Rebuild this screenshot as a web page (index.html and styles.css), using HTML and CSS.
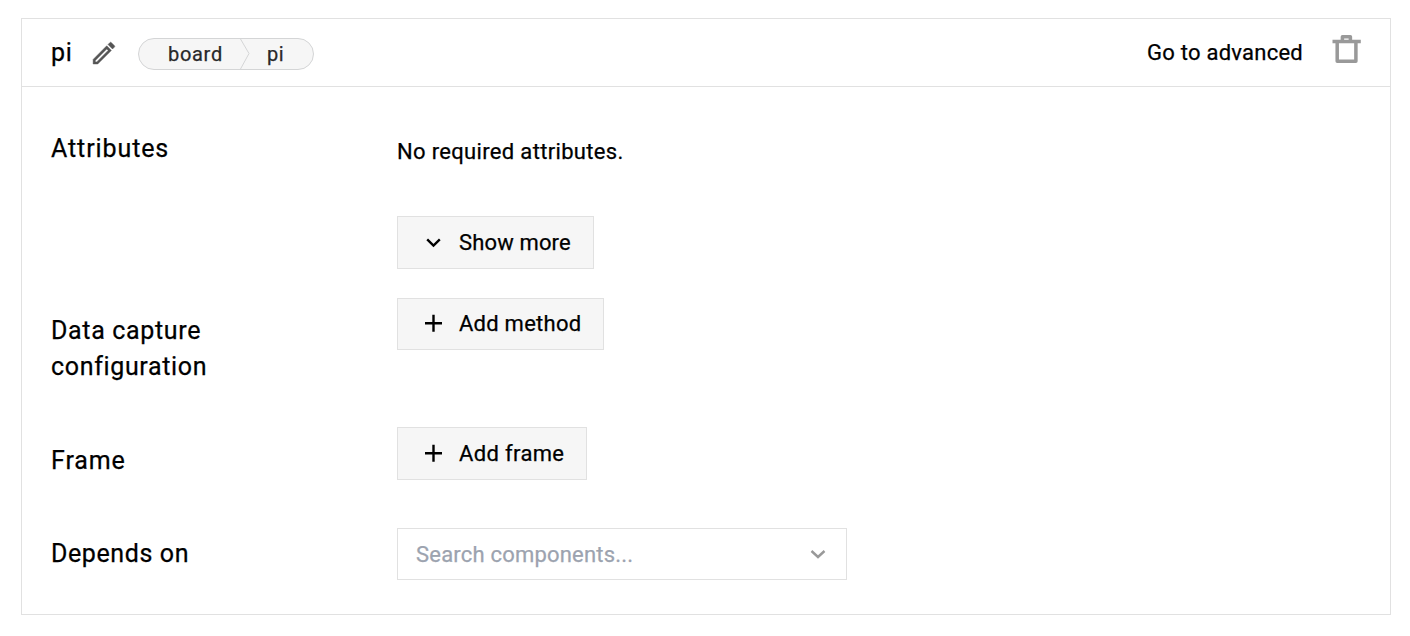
FILE: index.html
```html
<!DOCTYPE html>
<html lang="en">
<head>
<meta charset="utf-8">
<title>pi</title>
<link rel="stylesheet" href="styles.css">
</head>
<body>
<main class="card">
  <header class="card-header">
    <h1 class="name">pi</h1>
    <svg class="edit" width="30" height="30" viewBox="0 0 24 24" fill="#555"><path fill-rule="evenodd" d="M3.3 17.1V20.8H7L17.9 9.9 14.2 6.2ZM5.1 19.1V17.9L14.2 8.8 15.3 9.9 6.2 19.1ZM15.2 5.2 16.8 3.6Q17.3 3.1 17.8 3.6L20.4 6.2Q20.9 6.7 20.4 7.2L18.8 8.8Z" stroke="#555" stroke-width=".35"/></svg>
    <div class="crumbs">
      <span class="crumb crumb-type">board</span>
      <svg class="crumb-sep" width="10" height="30" viewBox="0 0 10 30" fill="none" stroke="#d4d5d6"><path d="M.5 0 9 14.5.5 30"/></svg>
      <span class="crumb crumb-model">pi</span>
    </div>
    <a class="advanced">Go to advanced</a>
    <svg class="trash" width="30" height="30" viewBox="0 0 30 30" fill="none" stroke="#999" stroke-width="3.5" stroke-linejoin="round"><path d="M.5 7.4H28.8M10.4 7V2.7H18.4V7M5.2 8V27.2H23.9V8"/></svg>
  </header>
  <section class="row row-attributes">
    <h2 class="label">Attributes</h2>
    <div class="field">
      <p class="note">No required attributes.</p>
      <button class="button button-more"><svg class="icon" width="22" height="22" viewBox="0 0 22 22" fill="none" stroke="#000" stroke-width="2.4"><path d="M4.2 7.4 10.5 13.5 16.8 7.4"/></svg><span class="text text-more">Show more</span></button>
    </div>
  </section>
  <section class="row row-capture">
    <h2 class="label label-capture">Data capture<br>configuration</h2>
    <button class="button button-method"><svg class="icon" width="22" height="22" viewBox="0 0 22 22" fill="none" stroke="#000" stroke-width="2.4"><path d="M2 10.2H19M10.5 1.7V18.7"/></svg><span class="text text-method">Add method</span></button>
  </section>
  <section class="row row-frame">
    <h2 class="label label-frame">Frame</h2>
    <button class="button button-frame"><svg class="icon" width="22" height="22" viewBox="0 0 22 22" fill="none" stroke="#000" stroke-width="2.4"><path d="M2 10.2H19M10.5 1.7V18.7"/></svg><span class="text text-frame">Add frame</span></button>
  </section>
  <section class="row row-depends">
    <h2 class="label label-depends">Depends on</h2>
    <div class="select"><span class="placeholder">Search components...</span><svg width="22" height="22" viewBox="0 0 22 22" fill="none" stroke="#999" stroke-width="2.4"><path d="M4.5 8 11 14 17.5 8"/></svg></div>
  </section>
</main>
</body>
</html>
```
FILE: styles.css
```css
* { box-sizing: border-box; }
body { margin: 0; padding: 18px 19px 0 21px; background: #fff; color: #000; font-family: Roboto, "Liberation Sans", sans-serif; font-size: 22px; -webkit-text-stroke: .25px currentColor; }
h1, h2, p { margin: 0; font-weight: 400; }
.card { height: 597px; border: 1px solid #e1e1e1; }
.card-header { display: flex; align-items: center; height: 68px; padding: 0 28px 0 29px; border-bottom: 1px solid #e1e1e1; }
.name { width: 38px; font-size: 25px; letter-spacing: .6px; }
.edit { margin: 0 1px 0 0; }
.crumbs { display: flex; align-items: center; width: 176px; height: 32px; margin: 3px 0 0 18px; border: 1px solid #d4d5d6; border-radius: 16px; background: #f6f6f6; color: #282829; font-size: 20px; }
.crumb-type { width: 72px; margin-left: 29px; letter-spacing: .7px; }
.crumb-model { margin-left: 17px; letter-spacing: .6px; }
.advanced { margin-left: auto; letter-spacing: .25px; }
.trash { margin: -8px 0 0 29px; overflow: visible; }
.row { display: grid; grid-template-columns: 346px 1fr; align-items: start; padding-left: 29px; }
.label { padding-top: 15px; font-size: 25px; line-height: 36px; letter-spacing: .9px; }
.label-capture { letter-spacing: .66px; }
.label-frame { padding-top: 16px; }
.label-depends { padding-top: 8px; letter-spacing: .6px; }
.row-attributes { height: 211px; padding-top: 29px; }
.row-capture { height: 129px; }
.row-frame { height: 101px; }
.note { padding-top: 21px; line-height: 30px; letter-spacing: .33px; }
.button { display: flex; align-items: center; height: 53px; padding: 0 0 0 25px; border: 1px solid #e1e1e1; background: #f6f6f6; color: #000; font: inherit; white-space: nowrap; }
.icon { flex: none; margin-right: 14px; }
.text-more { letter-spacing: .15px; }
.text-method { margin-top: -1px; letter-spacing: .25px; }
.text-frame { letter-spacing: .35px; }
.button-more { width: 197px; margin-top: 49px; }
.button-method { width: 207px; height: 52px; }
.button-frame { width: 190px; }
.select { display: flex; align-items: center; justify-content: space-between; width: 450px; height: 52px; padding: 0 17px 0 18px; border: 1px solid #e1e1e1; color: #9ca3af; }
.placeholder { letter-spacing: .2px; }
```
